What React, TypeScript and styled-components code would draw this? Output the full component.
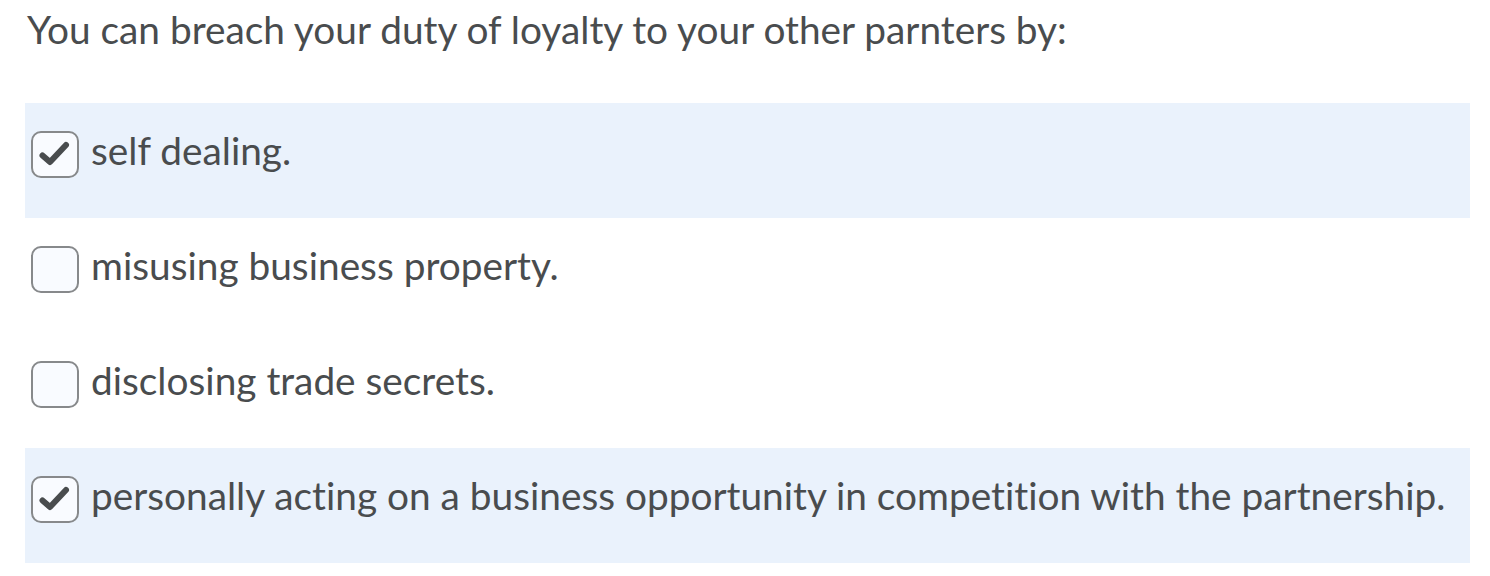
import React from "react";
import styled, { createGlobalStyle } from "styled-components";

const Global = createGlobalStyle`
  html, body { margin: 0; padding: 0; background: #ffffff; }
  body {
    font-family: Lato, "Noto Sans", sans-serif;
    color: #494c4e;
    font-variant-ligatures: no-common-ligatures;
    font-feature-settings: "liga" 0, "clig" 0;
  }
`;

const Page = styled.div`
  width: 1490px;
  height: 576px;
  box-sizing: border-box;
  padding: 6px 20px 0 25px;
`;

const Question = styled.div`
  font-size: 38.8px;
  line-height: 47px;
  padding-left: 2px;
  margin: 0 0 50px 0;
`;

const List = styled.div`
  display: flex;
  flex-direction: column;
  width: 1445px;
`;

const Row = styled.label<{ $checked: boolean }>`
  display: flex;
  align-items: flex-start;
  gap: 12px;
  height: 115px;
  box-sizing: border-box;
  padding: 24px 0 0 6px;
  background: ${(p) => (p.$checked ? "#eaf2fc" : "transparent")};
`;

const Box = styled.span`
  flex: none;
  width: 48px;
  height: 47px;
  margin-top: 4px;
  box-sizing: border-box;
  border: 2px solid #87898b;
  border-radius: 10px;
  background: #f9fbff;
  display: flex;
  align-items: center;
  justify-content: center;
`;

const Label = styled.span`
  font-size: 38.8px;
  line-height: 47px;
  white-space: nowrap;
`;

const Check = () => (
  <svg width="44" height="43" viewBox="0 0 44 43" fill="none">
    <path
      d="M9.5 22.5 L17 29 L33 12"
      stroke="#494c4e"
      strokeWidth="6"
      strokeLinecap="round"
      strokeLinejoin="round"
    />
  </svg>
);

const options = [
  { text: "self dealing.", checked: true },
  { text: "misusing business property.", checked: false },
  { text: "disclosing trade secrets.", checked: false },
  {
    text: "personally acting on a business opportunity in competition with the partnership.",
    checked: true,
  },
];

export default function App() {
  return (
    <>
      <Global />
      <Page>
        <Question>You can breach your duty of loyalty to your other parnters by:</Question>
        <List>
          {options.map((o) => (
            <Row key={o.text} $checked={o.checked}>
              <Box>{o.checked && <Check />}</Box>
              <Label>{o.text}</Label>
            </Row>
          ))}
        </List>
      </Page>
    </>
  );
}
